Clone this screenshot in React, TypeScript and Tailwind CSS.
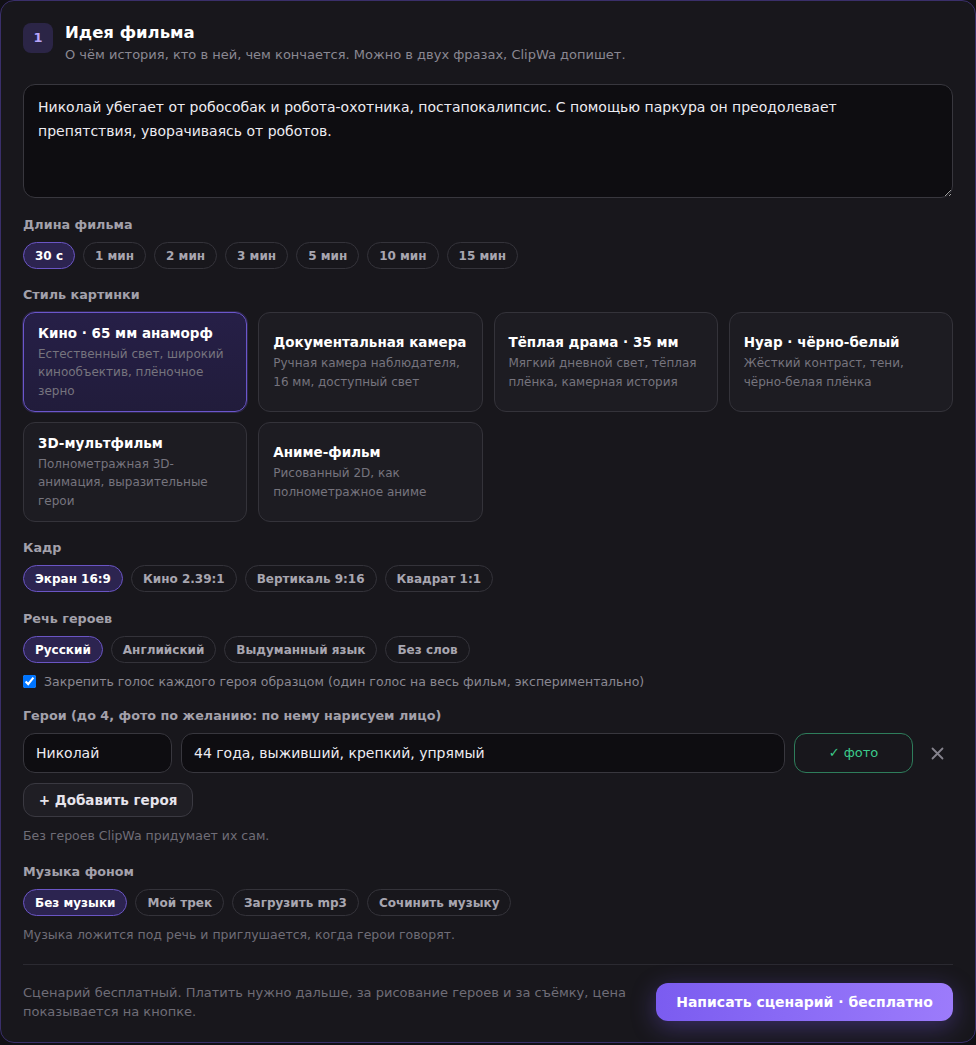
import React, { useState } from "react";

const lengths = ["30 с", "1 мин", "2 мин", "3 мин", "5 мин", "10 мин", "15 мин"];
const frames = ["Экран 16:9", "Кино 2.39:1", "Вертикаль 9:16", "Квадрат 1:1"];
const voices = ["Русский", "Английский", "Выдуманный язык", "Без слов"];
const music = ["Без музыки", "Мой трек", "Загрузить mp3", "Сочинить музыку"];

const styles = [
	{ title: "Кино · 65 мм анаморф", desc: "Естественный свет, широкий кинообъектив, плёночное зерно" },
	{ title: "Документальная камера", desc: "Ручная камера наблюдателя, 16 мм, доступный свет" },
	{ title: "Тёплая драма · 35 мм", desc: "Мягкий дневной свет, тёплая плёнка, камерная история" },
	{ title: "Нуар · чёрно-белый", desc: "Жёсткий контраст, тени, чёрно-белая плёнка" },
	{ title: "3D-мультфильм", desc: "Полнометражная 3D-анимация, выразительные герои" },
	{ title: "Аниме-фильм", desc: "Рисованный 2D, как полнометражное аниме" },
];

const Label = ({ children }: { children: React.ReactNode }) => (
	<div className="text-[12.75px] leading-4 font-bold text-[#a3a1ab] mb-[9px]">{children}</div>
);

const Chips = ({
	items,
	value,
	onPick,
}: {
	items: string[];
	value: string;
	onPick: (v: string) => void;
}) => (
	<div className="flex flex-wrap gap-2">
		{items.map((it) => (
			<button
				key={it}
				onClick={() => onPick(it)}
				className={
					it === value
						? "h-[27px] px-[11px] rounded-full border border-[#6a55c4] bg-[#2c2450] text-white text-[12px] font-bold"
						: "h-[27px] px-[11px] rounded-full border border-[#34333a] bg-transparent text-[#a8a6b0] text-[12px] font-bold"
				}
			>
				{it}
			</button>
		))}
	</div>
);

export default function App() {
	const [len, setLen] = useState("30 с");
	const [style, setStyle] = useState(0);
	const [frame, setFrame] = useState("Экран 16:9");
	const [voice, setVoice] = useState("Русский");
	const [track, setTrack] = useState("Без музыки");

	return (
		<div
			className="min-h-screen bg-[#111015]"
			style={{ fontFamily: '"DejaVu Sans", "Noto Sans", sans-serif' }}
		>
			<div className="bg-[#18171c] border border-[#3a2f6a] rounded-[14px] px-[22px] pt-[21px] pb-[21px]">
				{/* header */}
				<div className="flex gap-3">
					<div className="w-[30px] h-[30px] rounded-lg bg-[#2b2546] text-[#b8a5fb] text-[13px] font-bold flex items-center justify-center mt-px">
						1
					</div>
					<div>
						<div className="text-[16.5px] leading-[22px] font-bold text-white">Идея фильма</div>
						<div className="text-[13px] leading-[19px] text-[#8a8892] mt-px">
							О чём история, кто в ней, чем кончается. Можно в двух фразах, ClipWa допишет.
						</div>
					</div>
				</div>

				<textarea
					className="block w-full mt-5 h-[114px] bg-[#0e0d11] border border-[#38373e] rounded-xl px-[14px] py-[10px] text-[14px] leading-6 text-[#ecebf1] outline-none"
					defaultValue="Николай убегает от робособак и робота-охотника, постапокалипсис. С помощью паркура он преодолевает препятствия, уворачиваясь от роботов."
				/>

				<div className="mt-[19px]">
					<Label>Длина фильма</Label>
					<Chips items={lengths} value={len} onPick={setLen} />
				</div>

				<div className="mt-[18px]">
					<Label>Стиль картинки</Label>
					<div className="grid grid-cols-4 gap-x-[11px] gap-y-[10px]">
						{styles.map((s, i) => (
							<button
								key={s.title}
								onClick={() => setStyle(i)}
								className={
									i === style
										? "h-[100px] rounded-xl border border-[#6b56cc] bg-gradient-to-b from-[#261f47] to-[#211c3b] shadow-[0_0_0_1px_rgba(107,86,204,0.25)] px-[14px] flex flex-col justify-center text-left"
										: "h-[100px] rounded-xl border border-[#34333a] bg-[#1d1c22] px-[14px] flex flex-col justify-center text-left"
								}
							>
								<div className="text-[13.5px] leading-[19px] font-bold text-white whitespace-nowrap">{s.title}</div>
								<div className="text-[12px] leading-[18.5px] text-[#76747e] mt-[2px]">{s.desc}</div>
							</button>
						))}
					</div>
				</div>

				<div className="mt-[18px]">
					<Label>Кадр</Label>
					<Chips items={frames} value={frame} onPick={setFrame} />
				</div>

				<div className="mt-[19px]">
					<Label>Речь героев</Label>
					<Chips items={voices} value={voice} onPick={setVoice} />
					<label className="flex items-center gap-2 mt-[9px] text-[12.5px] leading-[19px] text-[#8a8892]">
						<input type="checkbox" defaultChecked className="w-[13px] h-[13px] m-0" />
						Закрепить голос каждого героя образцом (один голос на весь фильм, экспериментально)
					</label>
				</div>

				<div className="mt-[17px]">
					<Label>Герои (до 4, фото по желанию: по нему нарисуем лицо)</Label>
					<div className="flex items-center gap-[9px]">
						<input
							defaultValue="Николай"
							className="w-[149px] h-10 bg-[#0e0d11] border border-[#38373e] rounded-xl px-3 text-[14px] text-[#ecebf1] outline-none"
						/>
						<input
							defaultValue="44 года, выживший, крепкий, упрямый"
							className="flex-1 h-10 bg-[#0e0d11] border border-[#38373e] rounded-xl px-3 text-[14px] text-[#ecebf1] outline-none"
						/>
						<button className="w-[119px] h-10 rounded-xl border border-[#2e7d5b] text-[#3ccb8b] text-[13px]">
							✓ фото
						</button>
						<button className="w-[31px] h-10 flex items-center justify-center text-[#85838d]">
							<svg width="13" height="13" viewBox="0 0 13 13" fill="none" stroke="currentColor" strokeWidth="1.8" strokeLinecap="round">
								<path d="M1.5 1.5l10 10M11.5 1.5l-10 10" />
							</svg>
						</button>
					</div>
					<button className="mt-[10px] h-[34px] w-[170px] rounded-xl border border-[#3a3941] bg-[#1f1e24] text-[13.5px] font-bold text-[#e6e4ec]">
						+ Добавить героя
					</button>
					<div className="mt-[9px] text-[12.5px] leading-[19px] text-[#6f6d77]">Без героев ClipWa придумает их сам.</div>
				</div>

				<div className="mt-[19px]">
					<Label>Музыка фоном</Label>
					<Chips items={music} value={track} onPick={setTrack} />
					<div className="mt-[9px] text-[12.5px] leading-[19px] text-[#6f6d77]">
						Музыка ложится под речь и приглушается, когда герои говорят.
					</div>
				</div>

				<div className="mt-5 border-t border-[#2b2a31] pt-[18px] flex items-center gap-6">
					<div className="flex-1 text-[13px] leading-[19px] text-[#6f6d77]">
						Сценарий бесплатный. Платить нужно дальше, за рисование героев и за съёмку, цена показывается на кнопке.
					</div>
					<button className="h-[38px] w-[297px] rounded-xl bg-gradient-to-r from-[#7b5cf0] to-[#9c7bfb] text-white text-[14px] font-bold shadow-[0_6px_24px_rgba(124,92,240,0.35)]">
						Написать сценарий · бесплатно
					</button>
				</div>
			</div>
		</div>
	);
}
